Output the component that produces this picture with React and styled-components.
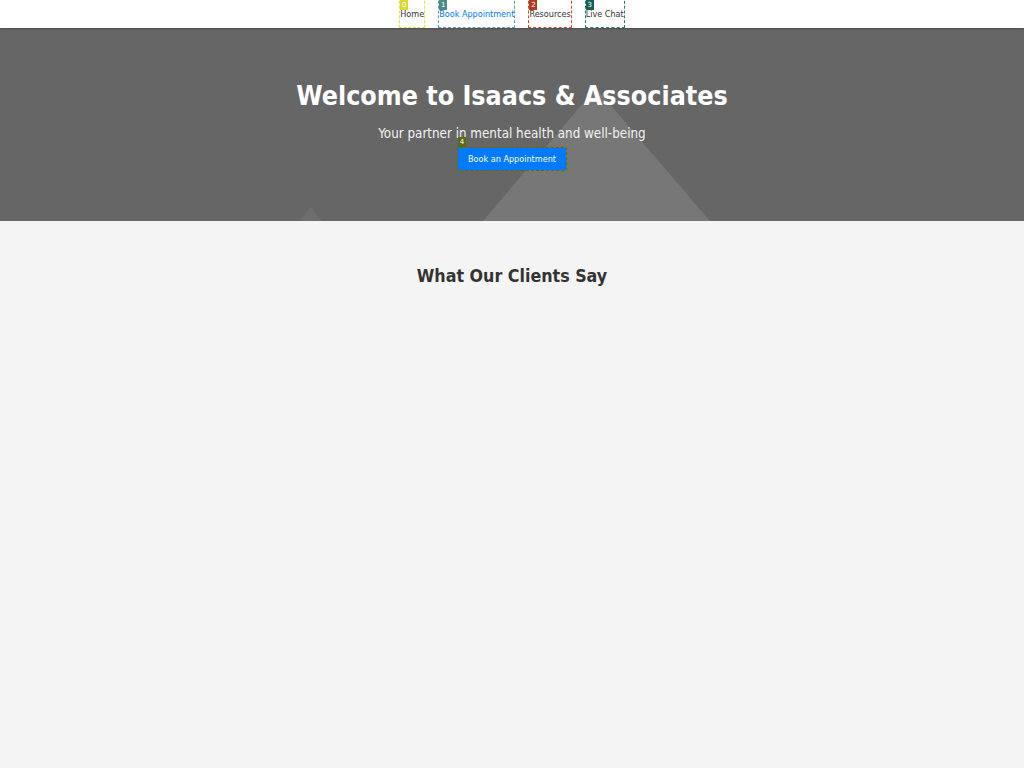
import React from "react";
import styled, { createGlobalStyle } from "styled-components";

const GlobalStyle = createGlobalStyle`
  html, body {
    margin: 0;
    padding: 0;
    background: #f4f4f4;
    font-family: "DejaVu Sans Condensed", "DejaVu Sans", sans-serif;
  }
  * { box-sizing: border-box; }
`;

const Header = styled.header`
  position: relative;
  z-index: 2;
  height: 28px;
  background: #ffffff;
  box-shadow: 0 1px 2px rgba(0, 0, 0, 0.25);
  overflow: hidden;
`;

const NavList = styled.ul`
  list-style: none;
  margin: -4px 0 0;
  padding: 0;
  display: flex;
  justify-content: center;
  gap: 13px;
`;

const NavItem = styled.li`
  display: flex;
`;

const NavLink = styled.a`
  position: relative;
  display: flex;
  align-items: center;
  height: 32px;
  padding: 3px 1px 0;
  font-size: 9px;
  line-height: 12px;
  text-decoration: none;
  white-space: nowrap;
  color: ${(p) => (p.$active ? "#007bff" : "#333333")};
  outline: 1px dashed ${(p) => p.$mark};
  outline-offset: -1px;
`;

const Badge = styled.span`
  position: absolute;
  left: ${(p) => p.$left || "0px"};
  top: ${(p) => p.$top || "0px"};
  width: 8px;
  height: 10px;
  background: ${(p) => p.$bg};
  color: #ffffff;
  font-family: "DejaVu Sans", sans-serif;
  font-size: 7px;
  line-height: 10px;
  text-align: center;
`;

const NavBadge = styled(Badge)`
  top: 4px;
  left: 1px;
`;

const Hero = styled.section`
  position: relative;
  overflow: hidden;
  height: 193px;
  padding-top: 52px;
  background: #666666;
  display: flex;
  flex-direction: column;
  align-items: center;
  text-align: center;
`;

const Mountains = styled.svg`
  position: absolute;
  inset: 0;
  width: 100%;
  height: 100%;
`;

const HeroContent = styled.div`
  position: relative;
  z-index: 1;
  display: flex;
  flex-direction: column;
  align-items: center;
`;

const Title = styled.h1`
  margin: 0;
  font-size: 26.6px;
  line-height: 32px;
  font-weight: bold;
  color: #ffffff;
`;

const Subtitle = styled.p`
  margin: 14px 0 0;
  font-size: 13.3px;
  line-height: 16px;
  color: #f2f2f2;
`;

const ButtonWrap = styled.div`
  position: relative;
  margin-top: 6px;
`;

const CTAButton = styled.a`
  display: block;
  padding: 5px 10px;
  background: #007bff;
  color: #ffffff;
  border-radius: 2px;
  font-size: 9px;
  line-height: 12px;
  text-decoration: none;
  white-space: nowrap;
  outline: 1px dashed #5b6b0e;
  outline-offset: 0;
`;

const Testimonials = styled.section`
  padding-top: 45px;
  text-align: center;
`;

const SectionTitle = styled.h2`
  margin: 0;
  font-size: 17.7px;
  line-height: 21px;
  font-weight: bold;
  color: #333333;
`;

const navItems = [
  { label: "Home", mark: "#e3e33a", badge: "#dada2c", active: false },
  { label: "Book Appointment", mark: "#5f9e98", badge: "#4d8a84", active: true },
  { label: "Resources", mark: "#d2492f", badge: "#b33a22", active: false },
  { label: "Live Chat", mark: "#2b7a6e", badge: "#17605a", active: false },
];

export default function App() {
  return (
    <>
      <GlobalStyle />
      <Header>
        <nav>
          <NavList>
            {navItems.map((item, i) => (
              <NavItem key={item.label}>
                <NavLink href="#" $active={item.active} $mark={item.mark}>
                  <NavBadge $bg={item.badge}>{i}</NavBadge>
                  {item.label}
                </NavLink>
              </NavItem>
            ))}
          </NavList>
        </nav>
      </Header>
      <Hero>
        <Mountains viewBox="0 0 1024 193" preserveAspectRatio="xMidYMid slice" aria-hidden="true">
          <polygon points="483,193 596,60 710,193" fill="#777777" />
          <polygon points="300,193 311,179 322,193" fill="#6e6e6e" />
        </Mountains>
        <HeroContent>
          <Title>Welcome to Isaacs &amp; Associates</Title>
          <Subtitle>Your partner in mental health and well-being</Subtitle>
          <ButtonWrap>
            <Badge $bg="#5b6b0e" $top="-11px">4</Badge>
            <CTAButton href="#">Book an Appointment</CTAButton>
          </ButtonWrap>
        </HeroContent>
      </Hero>
      <Testimonials>
        <SectionTitle>What Our Clients Say</SectionTitle>
      </Testimonials>
    </>
  );
}
